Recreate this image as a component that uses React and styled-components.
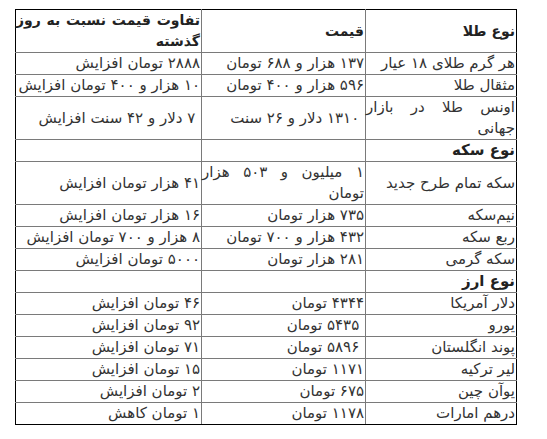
import styled, { createGlobalStyle } from "styled-components";

const GlobalStyle = createGlobalStyle`
  body {
    margin: 0;
    background: #fff;
  }
`;

const Page = styled.div`
  padding: 9px 0 0 15px;
`;

const Table = styled.table`
  direction: rtl;
  width: 501px;
  table-layout: fixed;
  border-collapse: collapse;
  font-family: "DejaVu Sans", "Noto Sans", sans-serif;
  font-size: 15px;
  color: #333;

  tr:first-child td {
    border-top-color: #000;
  }
  tr:last-child td {
    border-bottom-color: #000;
  }
  td:first-child {
    border-right-color: #000;
  }
  td:last-child {
    border-left-color: #000;
  }
`;

const Cell = styled.td`
  border: 1px solid #7a7a7a;
  padding: 0 1px 0 0;
  line-height: 21px;
  height: 21px;
  text-align: justify;
  text-align-last: right;
  vertical-align: middle;
  font-weight: ${(p) => (p.$bold ? "bold" : "normal")};
  font-size: ${(p) => (p.$head ? "14px" : "15px")};
  letter-spacing: ${(p) => (p.$head ? "-0.3px" : "normal")};
  color: ${(p) => (p.$bold ? "#222" : "#333")};
`;

const rows = [
  { head: true, cells: ["نوع طلا", "قیمت", "تفاوت قیمت نسبت به روز گذشته"] },
  { cells: ["هر گرم طلای ۱۸ عیار", "۱۳۷ هزار و ۶۸۸ تومان", "۲۸۸۸ تومان افزایش"] },
  { cells: ["مثقال طلا", "۵۹۶ هزار و ۴۰۰ تومان", "۱۰ هزار و ۴۰۰ تومان افزایش"] },
  { cells: ["اونس طلا در بازار جهانی", "\u00a0۱۳۱۰ دلار و ۲۶ سنت", "\u00a0۷ دلار و ۴۲ سنت افزایش"] },
  { section: "نوع سکه" },
  { cells: ["سکه تمام طرح جدید", "۱ میلیون و ۵۰۳ هزار تومان", "۴۱ هزار تومان افزایش"] },
  { cells: ["نیم‌سکه", "۷۳۵ هزار تومان", "۱۶ هزار تومان افزایش"] },
  { cells: ["ربع سکه", "۴۳۲ هزار و ۷۰۰ تومان", "۸ هزار و ۷۰۰ تومان افزایش"] },
  { cells: ["سکه گرمی", "۲۸۱ هزار تومان", "۵۰۰۰ تومان افزایش"] },
  { section: "نوع ارز" },
  { cells: ["دلار آمریکا", "۴۳۴۴ تومان", "۴۶ تومان افزایش"] },
  { cells: ["یورو", "\u00a0۵۴۳۵ تومان", "۹۲ تومان افزایش"] },
  { cells: ["پوند انگلستان", "\u00a0۵۸۹۶ تومان", "۷۱ تومان افزایش"] },
  { cells: ["لیر ترکیه", "۱۱۷۱ تومان", "۱۵ تومان افزایش"] },
  { cells: ["یوآن چین", "۶۷۵ تومان", "۲ تومان افزایش"] },
  { cells: ["درهم امارات", "۱۱۷۸ تومان", "۱ تومان کاهش"] },
];

export default function App() {
  return (
    <Page>
      <GlobalStyle />
      <Table>
        <colgroup>
          <col style={{ width: 151 }} />
          <col style={{ width: 164 }} />
          <col style={{ width: 186 }} />
        </colgroup>
        <tbody>
          {rows.map((row, i) =>
            row.section ? (
              <tr key={i}>
                <Cell $bold>{row.section}</Cell>
                <Cell />
                <Cell />
              </tr>
            ) : (
              <tr key={i}>
                {row.cells.map((c, j) => (
                  <Cell key={j} $bold={row.head} $head={row.head}>
                    {c}
                  </Cell>
                ))}
              </tr>
            )
          )}
        </tbody>
      </Table>
    </Page>
  );
}
